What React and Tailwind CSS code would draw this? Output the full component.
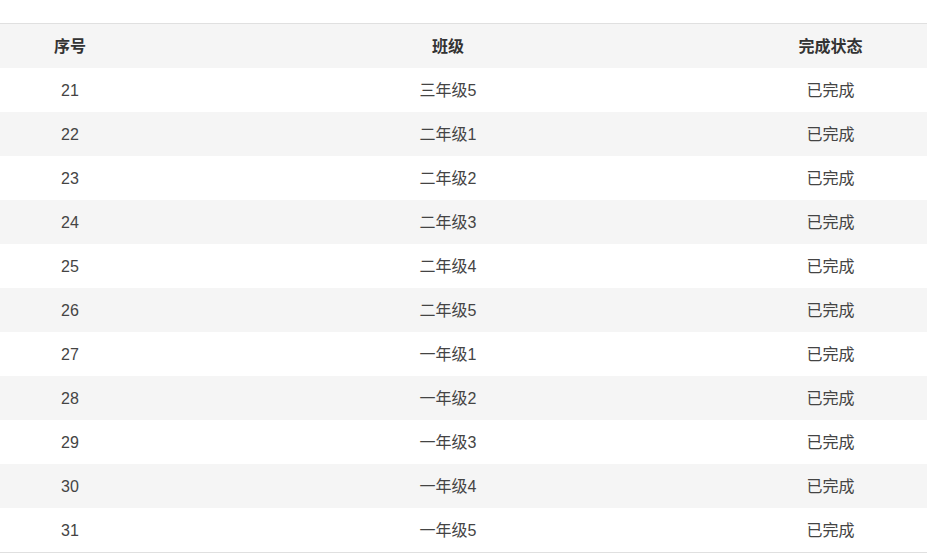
import React from 'react';

const rows = [
  { id: 21, name: '三年级5', status: '已完成' },
  { id: 22, name: '二年级1', status: '已完成' },
  { id: 23, name: '二年级2', status: '已完成' },
  { id: 24, name: '二年级3', status: '已完成' },
  { id: 25, name: '二年级4', status: '已完成' },
  { id: 26, name: '二年级5', status: '已完成' },
  { id: 27, name: '一年级1', status: '已完成' },
  { id: 28, name: '一年级2', status: '已完成' },
  { id: 29, name: '一年级3', status: '已完成' },
  { id: 30, name: '一年级4', status: '已完成' },
  { id: 31, name: '一年级5', status: '已完成' },
];

const App = () => {
  return (
    <div className="w-[927px] h-[560px] bg-white pt-[23px] text-[16px] text-[#444] [font-family:'Liberation_Sans','Noto_Sans_CJK_SC',sans-serif]">
      <div className="border-t border-b border-[#e0e0e0]">
        {/* Header */}
        <div className="grid grid-cols-[140px_616px_1fr] h-[44px] pt-px items-center bg-[#f5f5f5] font-bold text-[#333]">
          <div className="text-center">序号</div>
          <div className="text-center">班级</div>
          <div className="text-center pr-[22px]">完成状态</div>
        </div>
        {rows.map((row, i) => (
          <div
            key={row.id}
            className={`grid grid-cols-[140px_616px_1fr] h-[44px] pt-px items-center ${i % 2 === 1 ? 'bg-[#f5f5f5]' : 'bg-white'}`}
          >
            <div className="text-center">{row.id}</div>
            <div className="text-center">{row.name}</div>
            <div className="text-center pr-[22px]">{row.status}</div>
          </div>
        ))}
      </div>
    </div>
  );
};

export default App;
